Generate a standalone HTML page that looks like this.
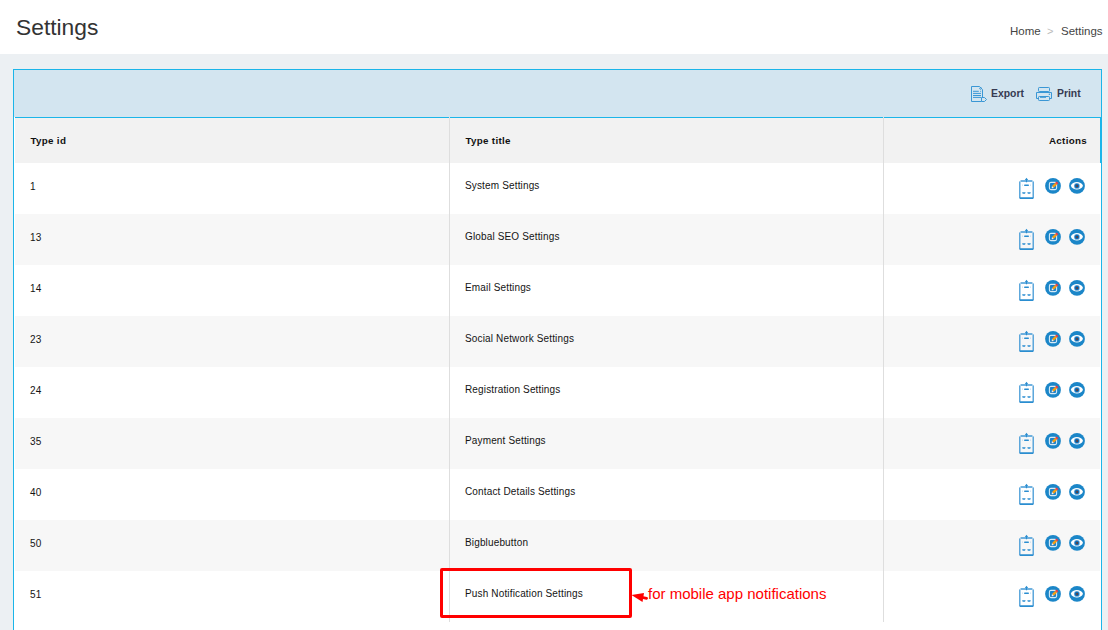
<!DOCTYPE html>
<html><head><meta charset="utf-8">
<style>
*{margin:0;padding:0;box-sizing:border-box}
html,body{width:1108px;height:630px;overflow:hidden;background:#fff;font-family:"Liberation Sans",sans-serif}
.abs{position:absolute}
.t{position:absolute;white-space:pre;line-height:1}
#gray{left:0;top:54px;width:1108px;height:576px;background:#ecf0f3}
#panel{left:13px;top:69px;width:1089px;height:600px;border:1px solid #1bb5e9;background:#fff}
#phead{left:14px;top:70px;width:1087px;height:47px;background:#d3e5f0}
#pline{left:15px;top:117px;width:1086px;height:1px;background:#1bb5e9}
#tright{left:1100px;top:117px;width:1px;height:46px;background:#1bb5e9}
#thead{left:15px;top:118px;width:1085px;height:45px;background:#f2f2f2}
.row{position:absolute;left:15px;width:1085px;height:51px}
.even{background:#f7f7f7}
.div{position:absolute;top:117px;width:1px;height:505px;background:#dedede}
.hd{font-weight:bold;font-size:9.8px;letter-spacing:0.3px;color:#111}
.cell{font-size:10px;letter-spacing:0.15px;color:#141414}
.num{}
</style></head><body>
<div class="t" style="left:16px;top:16px;font-size:22.8px;color:#333">Settings</div>
<div class="t" style="left:1010px;top:26px;font-size:11.5px;color:#444">Home</div>
<div class="t" style="left:1047px;top:26px;font-size:11px;color:#bbb">&gt;</div>
<div class="t" style="left:1061px;top:26px;font-size:11.5px;color:#444">Settings</div>

<div id="gray" class="abs"></div>
<div id="panel" class="abs"></div>
<div id="phead" class="abs"></div>
<div id="pline" class="abs"></div>
<div id="thead" class="abs"></div>

<div class="row" style="top:163px"></div>
<div class="row even" style="top:214px"></div>
<div class="row" style="top:265px"></div>
<div class="row even" style="top:316px"></div>
<div class="row" style="top:367px"></div>
<div class="row even" style="top:418px"></div>
<div class="row" style="top:469px"></div>
<div class="row even" style="top:520px"></div>
<div class="row" style="top:571px"></div>

<div class="div" style="left:449px"></div>
<div class="div" style="left:883px"></div>
<div id="tright" class="abs"></div>

<!-- header buttons -->
<div class="t hd" style="left:991px;top:89px;font-size:10.4px;letter-spacing:0px;color:#363a52">Export</div>
<div class="t hd" style="left:1057px;top:89px;font-size:10.4px;letter-spacing:0px;color:#363a52">Print</div>

<div class="t hd" style="left:30.5px;top:136px">Type id</div>
<div class="t hd" style="left:465.5px;top:136px">Type title</div>
<div class="t hd" style="left:1049px;top:136px">Actions</div>

<div class="t cell num" style="left:30px;top:182px">1</div>
<div class="t cell" style="left:465px;top:181px">System Settings</div>
<div class="t cell num" style="left:30px;top:233px">13</div>
<div class="t cell" style="left:465px;top:232px">Global SEO Settings</div>
<div class="t cell num" style="left:30px;top:284px">14</div>
<div class="t cell" style="left:465px;top:283px">Email Settings</div>
<div class="t cell num" style="left:30px;top:335px">23</div>
<div class="t cell" style="left:465px;top:334px">Social Network Settings</div>
<div class="t cell num" style="left:30px;top:386px">24</div>
<div class="t cell" style="left:465px;top:385px">Registration Settings</div>
<div class="t cell num" style="left:30px;top:437px">35</div>
<div class="t cell" style="left:465px;top:436px">Payment Settings</div>
<div class="t cell num" style="left:30px;top:488px">40</div>
<div class="t cell" style="left:465px;top:487px">Contact Details Settings</div>
<div class="t cell num" style="left:30px;top:539px">50</div>
<div class="t cell" style="left:465px;top:538px">Bigbluebutton</div>
<div class="t cell num" style="left:30px;top:590px">51</div>
<div class="t cell" style="left:465px;top:589px">Push Notification Settings</div>


<svg class="abs" style="left:0;top:0" width="1108" height="630" viewBox="0 0 1108 630">
<defs>
<g id="clip">
  <path d="M1019.8,182 L1019.8,197.6" stroke="#4299d6" stroke-width="1.3" stroke-linecap="round"/>
  <path d="M1033.2,182 L1033.2,197.6" stroke="#4299d6" stroke-width="1.3" stroke-linecap="round"/>
  <path d="M1021,181 L1032,181" stroke="#4299d6" stroke-width="1.3" stroke-linecap="round"/>
  <rect x="1019.6" y="197.3" width="13.8" height="1.7" rx="0.6" fill="#2a8dd0"/>
  <path d="M1026.5,177.8 L1028.2,180 L1027.1,180 L1027.1,182.2 L1025.9,182.2 L1025.9,180 L1024.8,180 Z" fill="#2a8dd0"/>
  <rect x="1024" y="184.4" width="5" height="1.5" rx="0.75" fill="#2a8dd0"/>
  <rect x="1022.4" y="184.5" width="0.6" height="1.3" fill="#a8d0ee"/>
  <rect x="1030" y="184.5" width="0.6" height="1.3" fill="#a8d0ee"/>
  <path d="M1022.1,192.3 L1025.6,192.3 L1025,193.8 L1022.7,193.8 Z" fill="#2a8dd0"/>
  <path d="M1027.3,192.3 L1030.8,192.3 L1030.2,193.8 L1027.9,193.8 Z" fill="#2a8dd0"/>
</g>
<g id="edit">
  <circle cx="1053" cy="185.9" r="7.9" fill="#1b86c8"/>
  <rect x="1049.4" y="182.4" width="7.2" height="7.2" rx="1.5" fill="#1a82cc" stroke="#d6eaf7" stroke-width="1.1"/>
  <path d="M1052.9,186.9 L1056.2,183.6" stroke="#f59c12" stroke-width="2.5"/>
  <path d="M1056.1,183.7 L1057.5,182.3" stroke="#e93a48" stroke-width="2.5"/>
  <path d="M1051.3,188.6 L1052,186 L1053.9,187.9 Z" fill="#eef2f5"/>
  <path d="M1051.3,188.6 L1051.6,187.5 L1052.4,188.3 Z" fill="#333"/>
</g>
<g id="eye">
  <circle cx="1077" cy="185.9" r="7.9" fill="#1b86c8"/>
  <path d="M1070.8,185.8 C1072.6,180.8 1081.2,180.8 1083,185.8 C1081.2,190.8 1072.6,190.8 1070.8,185.8 Z" fill="#fff"/>
  <circle cx="1076.9" cy="185.9" r="2.9" fill="#2a8ad2" stroke="#f4f0ea" stroke-width="0.35"/>
  <circle cx="1076.9" cy="185.9" r="2" fill="#1264a8"/>
  <circle cx="1077.1" cy="186" r="0.95" fill="#6e3a2c"/>
</g>
</defs>
<use href="#clip" transform="translate(0,0)"/><use href="#edit" transform="translate(0,0)"/><use href="#eye" transform="translate(0,0)"/>
<use href="#clip" transform="translate(0,51)"/><use href="#edit" transform="translate(0,51)"/><use href="#eye" transform="translate(0,51)"/>
<use href="#clip" transform="translate(0,102)"/><use href="#edit" transform="translate(0,102)"/><use href="#eye" transform="translate(0,102)"/>
<use href="#clip" transform="translate(0,153)"/><use href="#edit" transform="translate(0,153)"/><use href="#eye" transform="translate(0,153)"/>
<use href="#clip" transform="translate(0,204)"/><use href="#edit" transform="translate(0,204)"/><use href="#eye" transform="translate(0,204)"/>
<use href="#clip" transform="translate(0,255)"/><use href="#edit" transform="translate(0,255)"/><use href="#eye" transform="translate(0,255)"/>
<use href="#clip" transform="translate(0,306)"/><use href="#edit" transform="translate(0,306)"/><use href="#eye" transform="translate(0,306)"/>
<use href="#clip" transform="translate(0,357)"/><use href="#edit" transform="translate(0,357)"/><use href="#eye" transform="translate(0,357)"/>
<use href="#clip" transform="translate(0,408)"/><use href="#edit" transform="translate(0,408)"/><use href="#eye" transform="translate(0,408)"/>

<!-- export icon -->
<g fill="none" stroke="#3a97d5" stroke-width="1">
  <path d="M971.5,86.5 L979.5,86.5 L982.5,89.5 L982.5,97.5 M971.5,86.5 L971.5,101.5 L981.5,101.5"/>
  <circle cx="980.6" cy="88.4" r="0.9"/>
  <path d="M981.5,97.5 L984.5,97.5 L986.5,99.5 L984.5,101.5 L981.5,101.5 Z" />
</g>
<g fill="#3a97d5">
  <rect x="973" y="90.8" width="5.8" height="1" />
  <rect x="980.2" y="90.8" width="0.9" height="1" />
  <rect x="973" y="92.9" width="8" height="1" />
  <rect x="973" y="95" width="8" height="1" />
  <rect x="973" y="96.9" width="8" height="1" />
</g>
<!-- print icon -->
<g fill="none" stroke="#3a97d5" stroke-width="1">
  <rect x="1038.5" y="87.5" width="11" height="4" rx="0.8"/>
  <path d="M1038.5,98.5 L1036.5,98.5 L1036.5,92.5 L1051.5,92.5 L1051.5,98.5 L1049.5,98.5"/>
  <rect x="1038.5" y="96.5" width="11" height="4" rx="0.8"/>
</g>
<rect x="1040" y="96.8" width="6" height="1" fill="#3a97d5"/>
<circle cx="1049.4" cy="94.2" r="0.8" fill="#3a97d5"/>
<!-- annotation arrow -->
<path d="M631.5,595 L644,593 L642.5,602 Z" fill="#f00"/>
<path d="M638,596.5 L646.6,598.3" stroke="#f00" stroke-width="2.8" stroke-linecap="round"/>
</svg>

<!-- annotation -->
<div class="abs" style="left:440px;top:568px;width:192px;height:50px;border:3px solid #f00;border-radius:2px"></div>
<div class="t" style="left:648px;top:586px;font-size:15px;color:#f00">for mobile app notifications</div>
</body></html>
